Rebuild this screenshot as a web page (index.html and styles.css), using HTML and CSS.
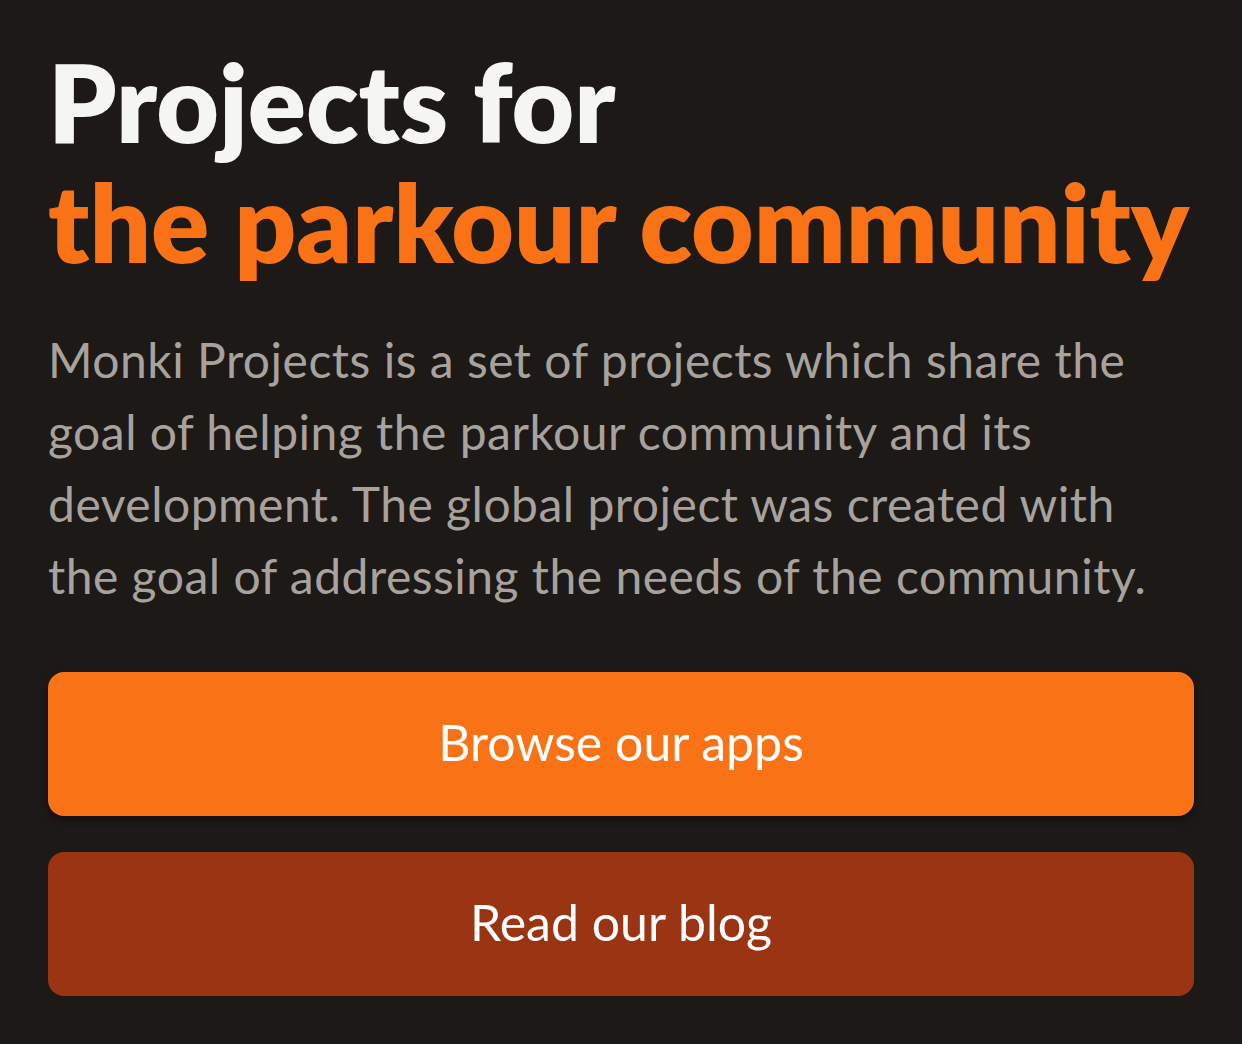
FILE: index.html
```html
<!DOCTYPE html>
<html lang="en">
<head>
<meta charset="utf-8">
<title>Monki Projects</title>
<link rel="stylesheet" href="styles.css">
</head>
<body>
<main class="hero">
  <h1 class="title">Projects for <span class="accent">the parkour community</span></h1>
  <p class="lead">Monki Projects is a set of projects which share the goal of helping the parkour community and its development. The global project was created with the goal of addressing the needs of the community.</p>
  <div class="actions">
    <a class="btn btn-primary" href="#">Browse our apps</a>
    <a class="btn btn-secondary" href="#">Read our blog</a>
  </div>
</main>
</body>
</html>
```

FILE: styles.css
```css
html, body {
  margin: 0;
  padding: 0;
  background: #1c1917;
}
body {
  font-family: "Lato", "Open Sans", sans-serif;
}
.hero {
  padding: 41px 48px 48px;
  box-sizing: border-box;
  width: 1242px;
}
.title {
  margin: 0;
  font-size: 108px;
  line-height: 120px;
  font-weight: 800;
  color: #f5f5f4;
  letter-spacing: 0;
}
.accent {
  display: block;
  white-space: nowrap;
  color: #f97316;
}
.lead {
  margin: 43px 0 0;
  font-size: 48px;
  line-height: 72px;
  color: #a8a29e;
  letter-spacing: 0.5px;
}
.actions {
  margin-top: 60px;
  display: flex;
  flex-direction: column;
  gap: 36px;
}
.btn {
  display: flex;
  align-items: center;
  justify-content: center;
  height: 144px;
  box-sizing: border-box;
  padding-bottom: 4px;
  border-radius: 16px;
  font-size: 50px;
  color: #ffffff;
  text-decoration: none;
}
.btn-primary {
  background: #f97316;
  box-shadow: 0 4px 10px rgba(0, 0, 0, 0.35);
}
.btn-secondary {
  background: #9a3412;
}
```
